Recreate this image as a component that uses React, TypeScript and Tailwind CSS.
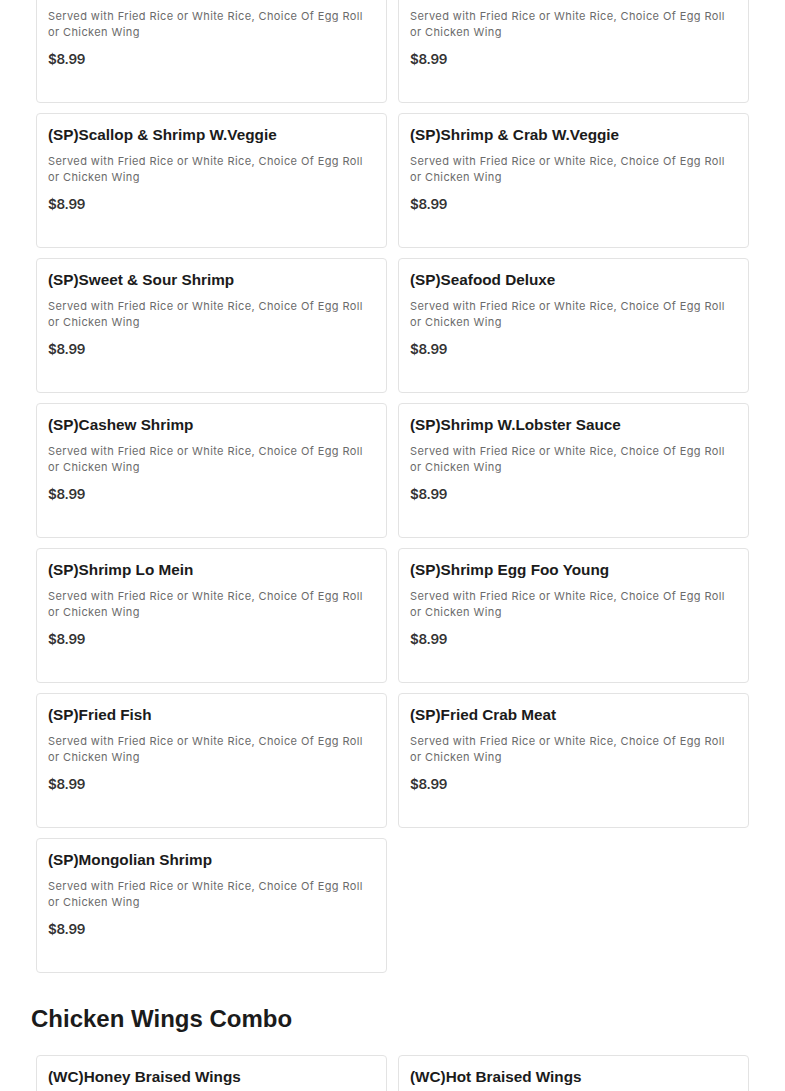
const desc = "Served with Fried Rice or White Rice, Choice Of Egg Roll or Chicken Wing";

const seafood = [
  "(SP)Shrimp W.Broccoli",
  "(SP)Shrimp W.Garlic Sauce",
  "(SP)Scallop & Shrimp W.Veggie",
  "(SP)Shrimp & Crab W.Veggie",
  "(SP)Sweet & Sour Shrimp",
  "(SP)Seafood Deluxe",
  "(SP)Cashew Shrimp",
  "(SP)Shrimp W.Lobster Sauce",
  "(SP)Shrimp Lo Mein",
  "(SP)Shrimp Egg Foo Young",
  "(SP)Fried Fish",
  "(SP)Fried Crab Meat",
  "(SP)Mongolian Shrimp",
];

const wings = ["(WC)Honey Braised Wings", "(WC)Hot Braised Wings"];

function ItemCard({ name }: { name: string }) {
  return (
    <div className="h-[135px] rounded-[4px] border border-[#e3e3e3] bg-white px-[11px] pt-[10px]">
      <h3 className="font-['Liberation_Sans',Arial,sans-serif] text-[15.3px] font-bold leading-[22px] text-[#1b1b1b]">
        {name}
      </h3>
      <p className="mt-[7px] max-w-[320px] font-['Inter',sans-serif] text-[11px] leading-[16px] tracking-[0.4px] text-[#6b6b6b]">
        {desc}
      </p>
      <p className="mt-[9px] font-['Inter',sans-serif] text-[13.5px] font-semibold leading-[20px] tracking-[-0.3px] text-[#333]">
        $8.99
      </p>
    </div>
  );
}

export default function App() {
  return (
    <div className="min-h-screen bg-white overflow-hidden">
      <div className="w-[785px] px-[31px]">
        <div className="-mt-[32px] grid grid-cols-2 gap-x-[11px] gap-y-[10px] px-[5px]">
          {seafood.map((n) => (
            <ItemCard key={n} name={n} />
          ))}
        </div>
        <h2 className="mt-[32px] font-['Liberation_Sans',Arial,sans-serif] text-[24px] font-bold leading-[28px] text-[#1b1b1b]">
          Chicken Wings Combo
        </h2>
        <div className="mt-[22px] grid grid-cols-2 gap-x-[11px] gap-y-[10px] px-[5px]">
          {wings.map((n) => (
            <ItemCard key={n} name={n} />
          ))}
        </div>
      </div>
    </div>
  );
}
